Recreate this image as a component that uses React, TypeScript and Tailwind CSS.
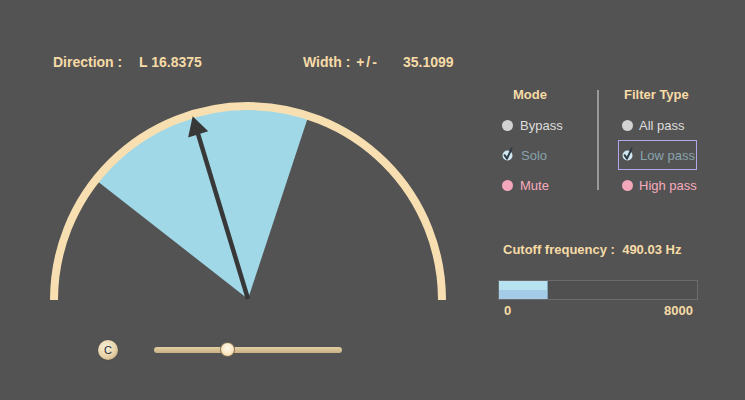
import React from "react";

const FONT = { fontFamily: '"Liberation Sans", Arial, sans-serif' };

type Radio = { label: string; state: "off" | "checked" | "mute" };

const MODE: Radio[] = [
  { label: "Bypass", state: "off" },
  { label: "Solo", state: "checked" },
  { label: "Mute", state: "mute" },
];

const FILTER: Radio[] = [
  { label: "All pass", state: "off" },
  { label: "Low pass", state: "checked" },
  { label: "High pass", state: "mute" },
];

function Dot({ state }: { state: Radio["state"] }) {
  if (state === "checked") {
    return (
      <svg width="12" height="14" viewBox="0 0 12 14" className="shrink-0 -mt-[3px]">
        <circle cx="5.5" cy="8.5" r="5" fill="#cfe8f1" />
        <path d="M2.6 8.2 L5 11.6 L9.6 1.6" stroke="#2f3a44" strokeWidth="2" fill="none" strokeLinecap="round" strokeLinejoin="round" />
      </svg>
    );
  }
  return (
    <span
      className={
        state === "mute"
          ? "block h-[11px] w-[11px] shrink-0 rounded-full bg-[#f4a7ba]"
          : "block h-[11px] w-[11px] shrink-0 rounded-full bg-[#d2d2d2]"
      }
    />
  );
}

function labelColor(state: Radio["state"]) {
  if (state === "checked") return "text-[#89a3ad]";
  if (state === "mute") return "text-[#f7abbd]";
  return "text-[#dedede]";
}

function Dial() {
  const cx = 205;
  const cy = 202;
  const pt = (deg: number, r: number) => {
    const a = (deg * Math.PI) / 180;
    return [cx + r * Math.sin(a), cy - r * Math.cos(a)];
  };
  const dir = -16.8375;
  const width = 35.1099;
  const [x1, y1] = pt(dir - width, 190);
  const [x2, y2] = pt(dir + width, 190);
  const [tx, ty] = pt(dir, 191);
  const [bx, by] = pt(dir, 172);
  const px = Math.cos((dir * Math.PI) / 180);
  const py = Math.sin((dir * Math.PI) / 180);
  const [lx, ly] = pt(dir, 176);

  return (
    <svg width="410" height="205" viewBox="0 0 410 205">
      <path d={`M ${cx} ${cy} L ${x1} ${y1} A 190 190 0 0 1 ${x2} ${y2} Z`} fill="#a0d8e7" />
      <path d={`M ${cx - 194} ${cy + 1} A 194 194 0 0 1 ${cx + 194} ${cy + 1}`} stroke="#f8dfb1" strokeWidth="8" fill="none" />
      <line x1={cx} y1={cy} x2={lx} y2={ly} stroke="#383838" strokeWidth="4.5" />
      <polygon
        points={`${tx},${ty} ${bx + px * 10.5},${by + py * 10.5} ${bx - px * 10.5},${by - py * 10.5}`}
        fill="#383838"
      />
    </svg>
  );
}

function RadioColumn({ title, items, titlePad, rowPad, boxed }: { title: string; items: Radio[]; titlePad: string; rowPad: string; boxed: boolean }) {
  return (
    <div className="flex w-[100px] flex-col">
      <div className={`flex h-[30px] items-center whitespace-nowrap text-[13px] font-bold text-[#f7dba7] ${titlePad}`}>{title}</div>
      {items.map((it) => (
        <div key={it.label} className={`flex h-[30px] items-center ${rowPad}`}>
          <div
            className={
              boxed
                ? it.state === "checked"
                  ? "flex h-[30px] w-[79px] shrink-0 items-center gap-[6px] border border-[#b4a6ea] pl-[3px]"
                  : "flex h-[30px] w-[79px] shrink-0 items-center gap-[6px] border border-transparent pl-[3px]"
                : "flex items-center gap-[7px]"
            }
          >
            <Dot state={it.state} />
            <span className={`whitespace-nowrap text-[13px] leading-none ${labelColor(it.state)}`}>{it.label}</span>
          </div>
        </div>
      ))}
    </div>
  );
}

export default function App() {
  return (
    <div className="h-[400px] w-[745px] overflow-hidden bg-[#535353]" style={FONT}>
      <div className="flex pl-[53px] pt-[53px] text-[14px] font-bold leading-[18px] text-[#f7dba7]">
        <span className="w-[86px]">Direction :</span>
        <span className="w-[164px]">L 16.8375</span>
        <span className="w-[100px] whitespace-nowrap">
          Width : <span className="ml-[2px] tracking-[2px]">+/-</span>
        </span>
        <span>35.1099</span>
      </div>

      <div className="flex">
        <div className="ml-[43px] mt-[26px] flex w-[410px] flex-col">
          <Dial />
          <div className="mt-[38px] flex items-center">
            <div className="ml-[55px] flex h-[20px] w-[20px] items-center justify-center rounded-full bg-[radial-gradient(circle_at_40%_35%,#fbefd6_0%,#e6d2a8_55%,#b99c6c_100%)] shadow-[0_0_1px_#333]">
              <span className="text-[11px] leading-none text-[#1c2a3a]">C</span>
            </div>
            <div className="relative ml-[36px] h-[6px] w-[188px] rounded-full bg-[linear-gradient(#e3cfa4,#c9b083)]">
              <div className="absolute left-[66px] top-[-5px] h-[15px] w-[15px] rounded-full border border-[#7a6a50] bg-[radial-gradient(circle_at_50%_40%,#fffaf0_0%,#fbe5bd_60%,#e8c993_100%)]" />
            </div>
          </div>
        </div>

        <div className="ml-[45px] mt-[9px] flex w-[200px] flex-col">
          <div className="flex">
            <RadioColumn title="Mode" items={MODE} titlePad="pl-[15px]" rowPad="pl-[4px]" boxed={false} />
            <div className="my-[10px] w-[2px] bg-[#999999]" />
            <RadioColumn title="Filter Type" items={FILTER} titlePad="pl-[25px]" rowPad="pl-[19px]" boxed={true} />
          </div>

          <div className="mt-[42px] pl-[5px] text-[13px] font-bold leading-[16px] text-[#f7dba7]">
            Cutoff frequency :&nbsp;&nbsp;490.03 Hz
          </div>

          <div className="mt-[22px] flex h-[20px] w-[200px] border border-[#6c6c6c] bg-[#505050]">
            <div className="flex w-[49px] flex-col border-r border-[#7fa6bf]">
              <div className="h-1/2 bg-[#b7e2ef]" />
              <div className="h-1/2 bg-[#a4cce7]" />
            </div>
          </div>

          <div className="mt-[4px] flex justify-between pl-[6px] pr-[5px] text-[13px] font-bold leading-[14px] text-[#f7dba7]">
            <span>0</span>
            <span>8000</span>
          </div>
        </div>
      </div>
    </div>
  );
}
